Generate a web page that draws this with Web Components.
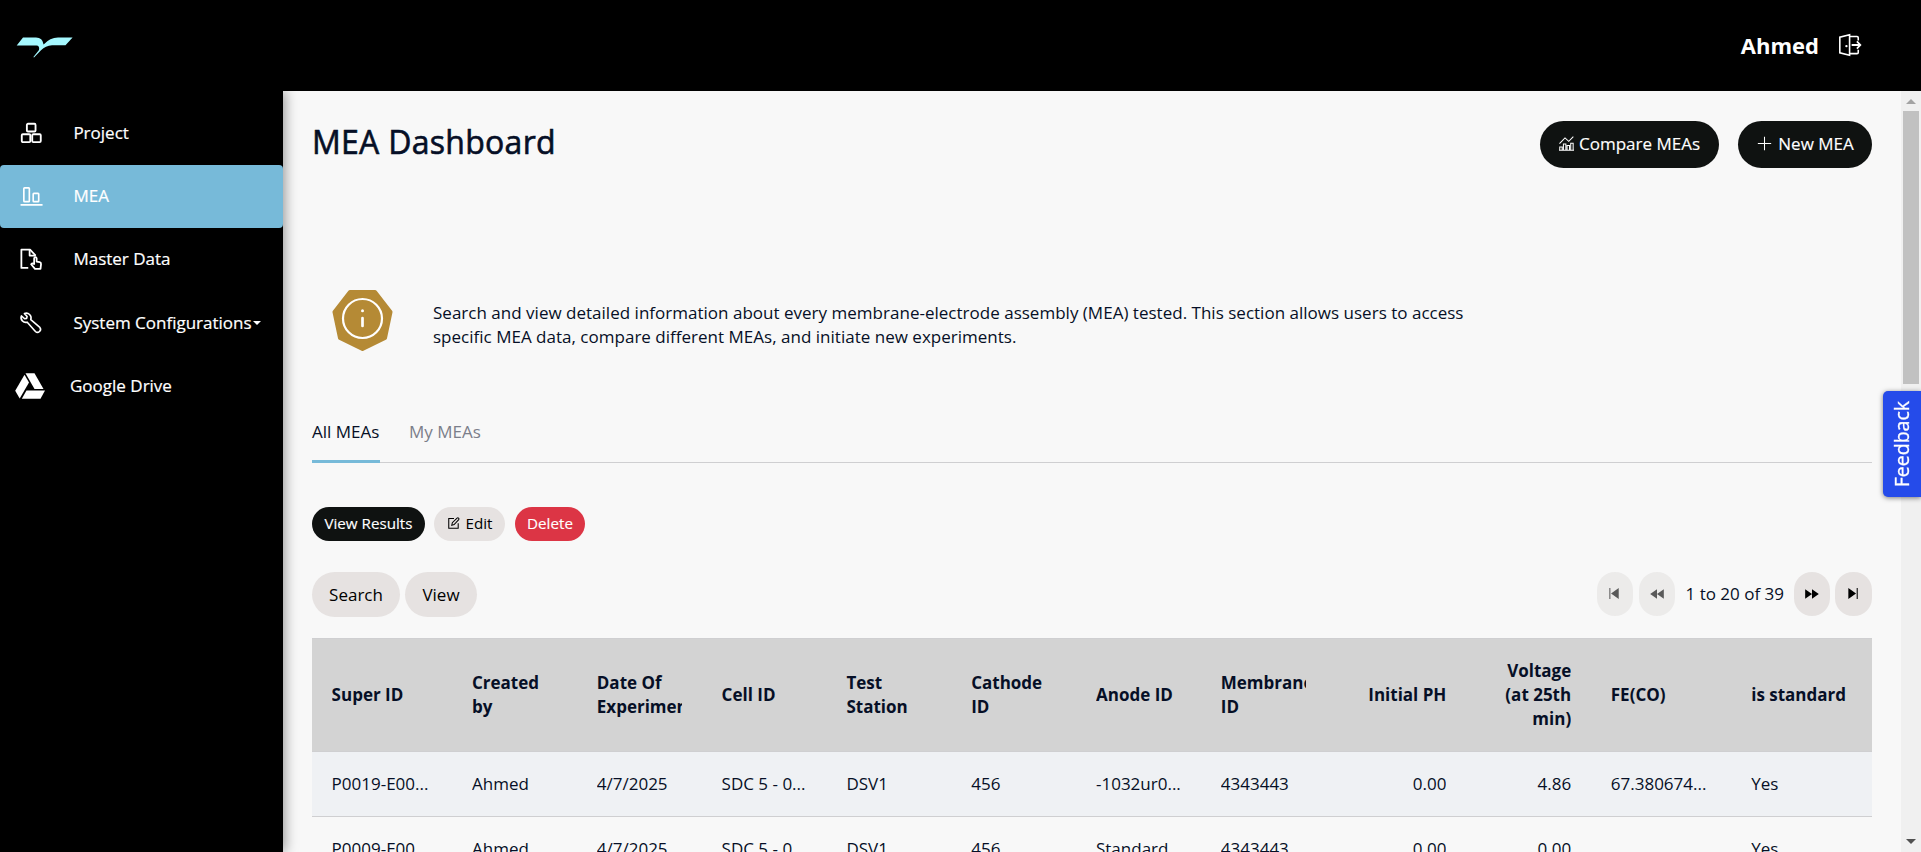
<!DOCTYPE html>
<html lang="en">
<head>
<meta charset="utf-8">
<title>MEA Dashboard</title>
<style>
html,body{margin:0;height:100%;overflow:hidden;background:#f8f8f8}
body{font-family:"Open Sans","Noto Sans",sans-serif;font-size:17px;line-height:24px;color:#060f26}
</style>
</head>
<body>
<mea-app></mea-app>
<script>
const define = (name, css, html) => customElements.define(name, class extends HTMLElement {
  constructor() {
    super();
    const t = document.createElement('template');
    t.innerHTML = `<style>*{box-sizing:border-box}${css}</style>${typeof html === 'function' ? html(this) : html}`;
    this.attachShadow({mode: 'open'}).append(t.content.cloneNode(true));
  }
});

/* 16-unit glyphs, filled with the current colour */
const ICONS = {
  boxes: '<g fill="none" stroke="currentColor" stroke-width="1.35"><rect x="5" y="1.3" width="6.3" height="5.6" rx=".8"/><rect x="1.3" y="8.9" width="6.2" height="5.7" rx=".8"/><rect x="8.9" y="8.9" width="6.2" height="5.7" rx=".8"/></g>',
  bars: '<g fill="none" stroke="currentColor" stroke-width="1.2"><rect x="2.8" y="2.1" width="4" height="10" rx=".5"/><rect x="9.6" y="6.1" width="4" height="6" rx=".5"/></g><path d="M.4 13.800h16v1.3H.4z"/>',
  doc: '<g fill="none" stroke="currentColor" stroke-width="1.3" stroke-linejoin="round"><path d="M6 14.5H1V1.2h6.3l4.1 4.3"/><path d="M7 1.2v4.3h4.4"/><path d="M10.3 11.6V7.500q.1-.9.9-.9t.9.9v2.4l2.2.4q1.1.3 1 1.4l-.4 3.5h-4l-2.800-3.4q.8-1 2.2-.2z"/></g>',
  wrench: '<path d="M.1 2.2a3.9 3.9 0 0 0 4.8 5.1l6.7 7.6a2.45 2.45 0 0 0 3.6-3.3L7.8 5.2A3.9 3.9 0 0 0 2.6.3l2.2 2.4-.4 1.5-1.6.3z" fill="none" stroke="currentColor" stroke-width="1.3" stroke-linejoin="round" transform="translate(.9 .9) scale(.89)"/>',
  chart: '<g fill="none" stroke="currentColor" stroke-width="1.1"><path d="M.8 15.3v-3.5h2.6v3.500zM4.7 15.3V8.6h2.6v6.7zM8.6 15.3v-5.1h2.6v5.1zM12.5 15.3V7.8h2.6v7.500zM0 15.3h16"/><path d="M.5 8.2 6.4 2l4 3.7L15.3.7"/></g>',
  plus: '<path d="M7.45.9h1.1v6.55h6.55v1.1H8.55v6.55h-1.1V8.55H.9v-1.1h6.55z"/>',
  edit: '<g fill="none" stroke="currentColor" stroke-width="1.4"><path d="M8 2H1v13h12.6V8.3"/><path d="m5 11 .8-3.4 6.3-6.2q1-.8 2 .1t.2 2L8.2 10z"/></g>',
  first: '<path d="M2.500 2.2h1.1v11.6H2.500zM12.500 2.2v11.6L4.300 8z"/>',
  prev: '<path d="M8 2.6v10.8L.2 8zM15.8 2.6v10.8L8 8z"/>',
  next: '<path d="M8 2.6v10.8L15.8 8zM.2 2.6v10.8L8 8z"/>',
  last: '<path d="M12.500 2.2h-1.1v11.6h1.1zM2.500 2.2v11.6L10.700 8z"/>',
  logout: '<g fill="none" stroke="currentColor" stroke-width="1.15"><path d="M7.7.5v15L.6 13.7V2.3zM7.7 1.8h5.4q.9 0 .9.9v2M7.7 14.3h5.4q.9 0 .9-.9v-2"/><path d="M9.2 8h6M13 5.4 15.5 8 13 10.6" stroke-width="1.3"/></g><circle cx="5.4" cy="8.8" r=".85"/>'
};
define('ui-icon', ':host{display:block;flex:none;width:var(--s,16px);height:var(--s,16px)}svg{display:block;width:100%;height:100%;overflow:visible}',
  el => `<svg viewBox="0 0 16 16" fill="currentColor">${ICONS[el.getAttribute('name')]}</svg>`);

define('brand-mark', ':host{display:block;width:57px;height:21px}svg{display:block}',
  '<svg width="57" height="21" viewBox="0 0 57 21" fill="#a5f8ff"><path d="M7 .5H20Q26.6.7 27.6 7.4 34 .7 42 .5h14.6L49.500 8.300H36Q29.500 9 25 13.200L18 20.400 17.400 20 23 13Q23.800 8.500 20.500 8.500H.7z"/></svg>');

define('app-header', `:host{display:flex;align-items:center;height:91px;background:#000;color:#fff;padding:0 60px 2px 16px;font-weight:700;font-size:22px}
  brand-mark{margin:5px auto 0 0}ui-icon{--s:22px;margin:1px 0 0 20px}`,
  '<brand-mark></brand-mark><slot></slot><ui-icon name="logout"></ui-icon>');

define('nav-item', `:host{display:flex;align-items:center;height:63px;padding:0 0 2px 20px;color:#fff;border-radius:4px;font-size:17px;-webkit-text-stroke:.2px}
  :host([active]){background:#77bad9}
  :host([menu]){height:64px;padding-bottom:1px}
  ui-icon{--s:22px;margin-right:31.4px}
  .caret{margin-left:1px;border:4px solid transparent;border-top-color:#fff;border-bottom:0}`,
  el => `<ui-icon name="${el.getAttribute('icon')}"></ui-icon><slot></slot>${el.hasAttribute('menu') ? '<span class="caret"></span>' : ''}`);

define('drive-item', ':host{display:flex;align-items:center;height:63px;padding:0 0 2px 15px;color:#fff;font-size:17px;-webkit-text-stroke:.2px}svg{margin-right:25px}',
  '<svg width="30" height="26" viewBox="0 0 30 26" fill="#fff"><path d="M10.500.2h9L28.500 16h-9z"/><path d="M9.500 1.800 14 9.500 4.700 25.500.2 17.700z"/><path d="M11.500 17.500H30L25.500 25.700H6.800z"/></svg><slot></slot>');

define('side-nav', ':host{display:block;flex:none;width:283px;padding-top:11px;background:#000;box-shadow:2px 0 12px rgba(0,0,0,.4);clip-path:inset(0 -20px 0 0);position:relative}',
  `<nav-item icon="boxes">Project</nav-item><nav-item icon="bars" active>MEA</nav-item><nav-item icon="doc">Master Data</nav-item>
   <nav-item icon="wrench" menu>System Configurations</nav-item><drive-item>Google Drive</drive-item>`);

define('pill-button', `:host{display:inline-flex;align-items:center;justify-content:center;gap:var(--gap,5px);width:var(--w);height:var(--h,45px);border-radius:24px;background:#e6e2e1;color:#000;white-space:nowrap}
  :host([kind=dark]){background:#0f1211;color:#fff}
  :host([kind=danger]){background:#dc3545;color:#fff}
  :host([small]){font-size:15.2px;--h:34px;padding-bottom:1.6px}
  :host([off]){background:#ecebea;color:#5a5a5a}`, '<slot></slot>');

define('page-title', ':host{display:flex;height:47px}h1{margin:-1px auto 0 0;font-size:32px;line-height:44px;font-weight:400;-webkit-text-stroke:.6px;letter-spacing:.28px}pill-button{--h:47px;-webkit-text-stroke:.15px;padding-bottom:2px;margin-left:19px}',
  `<h1>MEA Dashboard</h1>
   <pill-button kind="dark" style="--w:179px"><ui-icon name="chart" style="--s:15px"></ui-icon>Compare MEAs</pill-button>
   <pill-button kind="dark" style="--w:134px;--gap:6px;padding-left:1px"><ui-icon name="plus" style="--s:15px"></ui-icon>New MEA</pill-button>`);

define('info-note', ':host{display:flex;padding:0 0 0 20px;margin-top:123px;height:61px}svg{flex:none;margin:-.7px 40px 0 0}p{margin:10px 0 0;width:1060px;letter-spacing:.013px}',
  `<svg width="61" height="61" viewBox="0 0 61 61"><path d="M18 2h25L58.500 22 53 48 30.500 59 8 48 2.500 22z" fill="#b58a35" stroke="#b58a35" stroke-width="4" stroke-linejoin="round"/><circle cx="30.500" cy="28.500" r="19.500" fill="none" stroke="#fff" stroke-width="2.200"/><circle cx="30.500" cy="20.700" r="1.500" fill="#fff"/><path d="M30.500 28v8" stroke="#fff" stroke-width="2.700" stroke-linecap="round"/></svg><p><slot></slot></p>`);

define('tab-bar', ':host{display:flex;gap:29px;margin-top:68px;height:43px;border-bottom:1px solid #cfcfd1}span{height:43px;color:#7b7e8a}.on{color:#060f26;border-bottom:3px solid #77bad9;width:68px}',
  '<span class="on">All MEAs</span><span>My MEAs</span>');

define('action-bar', ':host{display:flex;gap:9px;margin-top:44px}',
  `<pill-button small kind="dark" style="--w:113px;-webkit-text-stroke:.15px">View Results</pill-button>
   <pill-button small style="--w:71px;--gap:6px;padding-left:1px"><ui-icon name="edit" style="--s:12px"></ui-icon>Edit</pill-button>
   <pill-button small kind="danger" style="--w:70px;margin-left:1px;-webkit-text-stroke:.15px">Delete</pill-button>`);

define('table-tools', ':host{display:flex;gap:5px;margin-top:31px;height:45px}.n{margin:10px 5px 0 6px}.sp{flex:1}.p{--w:36px;--h:44px;border-radius:18px;padding-bottom:1px}ui-icon{--s:14px}',
  `<pill-button style="--w:88px">Search</pill-button><pill-button style="--w:72px">View</pill-button><span class="sp"></span>
   <pill-button class="p" off><ui-icon name="first" style="--s:15px"></ui-icon></pill-button><pill-button class="p" off style="margin-left:1px"><ui-icon name="prev"></ui-icon></pill-button>
   <span class="n">1 to 20 of 39</span>
   <pill-button class="p"><ui-icon name="next"></ui-icon></pill-button><pill-button class="p" style="--w:37px"><ui-icon name="last" style="--s:15px"></ui-icon></pill-button>`);

const HEAD = ['Super ID', 'Created by', 'Date Of Experiment', 'Cell ID', 'Test Station', 'Cathode ID', 'Anode ID', 'Membrane ID', 'Initial PH', 'Voltage (at 25th min)', 'FE(CO)', 'is standard'];
const ROWS = [
  ['P0019-E00...', 'Ahmed', '4/7/2025', 'SDC 5 - 0...', 'DSV1', '456', '-1032ur0...', '4343443', '0.00', '4.86', '67.380674...', 'Yes'],
  ['P0009-E00...', 'Ahmed', '4/7/2025', 'SDC 5 - 0...', 'DSV1', '456', 'Standard', '4343443', '0.00', '0.00', '', 'Yes']
];
const cells = list => list.map((t, i) => `<div${i === 8 || i === 9 ? ' class="num"' : ''}><span>${t}</span></div>`).join('');
define('mea-table', `:host{display:block;margin-top:21px;border-top:1px solid #cfcfd1}
  .row{display:grid;grid-template-columns:9fr repeat(7,8fr) 9fr 8fr 9fr 9fr;height:65px;border-bottom:1px solid #cfcfd1}
  .row>div{display:flex;align-items:center;padding:0 20px 0 19.6px;min-width:0}
  span{flex:1;min-width:0;overflow:hidden;white-space:nowrap}
  .num{text-align:right}
  .head{height:113px;background:#d3d3d3;font-weight:700}
  .head span{white-space:normal}
  .odd{background:#eff1f4}`,
  `<div class="row head">${cells(HEAD)}</div>` + ROWS.map((r, i) => `<div class="row${i ? '' : ' odd'}">${cells(r)}</div>`).join(''));

define('scroll-rail', `:host{display:flex;flex-direction:column;flex:none;width:20px;background:#f0f0f0;align-items:center}
  i{border:5px solid transparent}
  .up{border-bottom-color:#a3a3a3;border-top:0;margin:8px 0 7px}
  .thumb{width:16px;height:273px;background:#c1c1c1}
  .down{border-top-color:#505050;border-bottom:0;margin:auto 0 8px}`,
  '<i class="up"></i><span class="thumb"></span><i class="down"></i>');

define('feedback-tab', `:host{position:fixed;right:0;top:391px;width:38px;height:106px;background:#254bea;border-radius:5px 0 0 5px;color:#fff;display:flex;align-items:center;justify-content:center;box-shadow:0 1px 5px rgba(0,0,0,.5);font-size:19.5px;-webkit-text-stroke:.3px}
  span{writing-mode:vertical-rl;transform:rotate(180deg)}`, '<span><slot></slot></span>');

define('mea-app', `:host{display:flex;flex-direction:column;height:100vh;overflow:hidden}
  .body{display:flex;flex:1;min-height:0}
  main{flex:1;min-width:0;padding:30px 29px 0;overflow:hidden}`,
  `<app-header>Ahmed</app-header>
   <div class="body"><side-nav></side-nav>
    <main><page-title></page-title>
     <info-note>Search and view detailed information about every membrane-electrode assembly (MEA) tested. This section allows users to access specific MEA data, compare different MEAs, and initiate new experiments.</info-note>
     <tab-bar></tab-bar><action-bar></action-bar><table-tools></table-tools><mea-table></mea-table>
    </main><scroll-rail></scroll-rail></div>
   <feedback-tab>Feedback</feedback-tab>`);
</script>
</body>
</html>
